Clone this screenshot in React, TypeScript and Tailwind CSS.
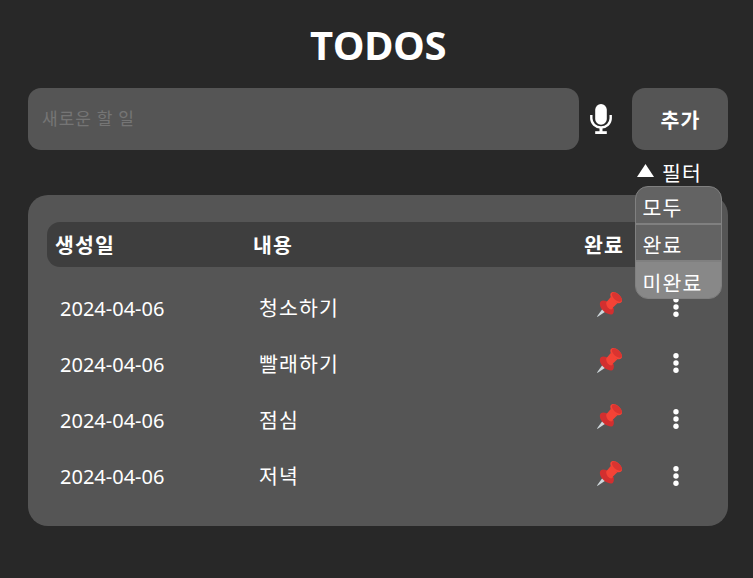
import React from "react";

const todos = ["청소하기", "빨래하기", "점심", "저녁"];

function Mic() {
  return (
    <svg width="22" height="31" viewBox="0 0 22 31" fill="none" stroke="#fff">
      <rect x="5.2" y="0" width="11.6" height="20.8" rx="5.8" fill="#fff" stroke="none" />
      <path d="M1.3 11v3.3a9.7 9.2 0 0 0 19.4 0V11" strokeWidth="2.4" />
      <path d="M11 23v5" strokeWidth="3" />
      <path d="M5.2 28.6h11.6" strokeWidth="2.8" />
    </svg>
  );
}

function Pin() {
  return (
    <svg width="26" height="26" viewBox="0 0 26 26">
      <path d="M5.6 16.8L0 24.4Q0 25 0.7 24.8L8.6 19.6Z" fill="#cfd8dc" />
      <path d="M2.8 12C2.8 8.6 6 7.8 9.3 9L16.6 16.4C17.2 19 16.8 22 14.6 22.4C10 22.8 3 18 2.8 12Z" fill="#d32f2f" />
      <path d="M9.2 11.4Q9 9.6 10.4 9L13.8 5L20.4 11.2L16 15.6Q15.8 17.4 14.4 17.4C11.8 17.2 9.6 14.6 9.2 11.4Z" fill="#f44336" />
      <path d="M13.6 1.6C14.6-.6 18.4-.4 21.4 2.2C24.4 4.8 26 8.4 24.4 10.2C22.6 12.2 19 11.2 16.2 8.4C13.6 5.8 12.8 3.4 13.6 1.6Z" fill="#f44336" />
      <ellipse cx="19.9" cy="5.1" rx="6" ry="3.1" transform="rotate(42 19.9 5.1)" fill="#da3430" />
    </svg>
  );
}

function Dots() {
  return (
    <svg width="6" height="20" viewBox="0 0 6 20" fill="#fff">
      <circle cx="3" cy="2.8" r="2.7" />
      <circle cx="3" cy="10" r="2.7" />
      <circle cx="3" cy="17.2" r="2.7" />
    </svg>
  );
}

export default function App() {
  return (
    <main className="h-[578px] w-[753px] overflow-hidden bg-[#282828] pr-[25px] pl-[28px] font-['Noto_Sans','Noto_Sans_CJK_KR',sans-serif] text-[20px] text-white">
      <h1 className="flex h-[88px] items-center justify-center pt-[2px] font-['Open_Sans',sans-serif] text-[40px] font-bold tracking-[-0.5px]">TODOS</h1>
      <div className="flex h-[62px]">
        <input className="w-[551px] rounded-[13px] bg-[#555555] px-[14px] pb-[3px] font-['Noto_Sans_CJK_KR',sans-serif] text-[17px] tracking-[1px] outline-none placeholder:text-[#757575]" placeholder="새로운 할 일" />
        <span className="flex w-[53px] items-center pl-[11px]"><Mic /></span>
        <button className="w-[96px] rounded-[13px] bg-[#555555] pt-px pl-px font-['Noto_Sans_CJK_KR',sans-serif] text-[20.5px] font-bold tracking-[1.1px]">추가</button>
      </div>
      <div className="relative z-10 flex h-[45px] justify-end">
        <div className="flex h-[45px] w-[92px] items-center font-['Noto_Sans_CJK_KR',sans-serif]">
          <svg className="mb-[4px] ml-px" width="17" height="13" viewBox="0 0 17 13"><path d="M8.5 0L17 13H0Z" fill="#fff" /></svg>
          <span className="ml-[8px] text-[20.5px] tracking-[1.1px]">필터</span>
        </div>
        <ul className="absolute top-[36px] right-[6px] h-[113px] w-[87px] overflow-hidden rounded-[13px] border border-[#808080] bg-[#636363] font-['Noto_Sans_CJK_KR',sans-serif] text-[20.5px] tracking-[1.1px]">
          <li className="flex h-[38px] items-center border-b-2 border-[#808080] pt-[5px] pl-[6.5px]">모두</li>
          <li className="flex h-[37px] items-center border-b-2 border-[#808080] pt-[4px] pl-[6.5px]">완료</li>
          <li className="flex h-[36px] items-center bg-[#888888] pt-[5px] pl-[6.5px]">미완료</li>
        </ul>
      </div>
      <section className="h-[331px] rounded-[20px] bg-[#555555] px-[19px] pt-[27px]">
        <div className="flex h-[45px] items-center rounded-[13px] bg-[#3e3e3e] pl-[8px] font-['Noto_Sans_CJK_KR',sans-serif] text-[20.5px] font-bold tracking-[1.1px]">
          <span className="w-[198px]">생성일</span>
          <span className="w-[331px]">내용</span>
          <span>완료</span>
        </div>
        <div className="pt-[13px]">
          {todos.map((name) => (
            <div key={name} className="group flex h-[56px] items-center pl-[13px]">
              <span className="w-[199px] pt-[2px]">2024-04-06</span>
              <span className="w-[338px] pb-[2px] font-['Noto_Sans_CJK_KR',sans-serif] text-[20.5px] tracking-[1.1px]">{name}</span>
              <span className="w-[76px] pb-[6px] group-last:pb-[4px]"><Pin /></span>
              <span className="pb-[2px] group-last:pb-0"><Dots /></span>
            </div>
          ))}
        </div>
      </section>
    </main>
  );
}
